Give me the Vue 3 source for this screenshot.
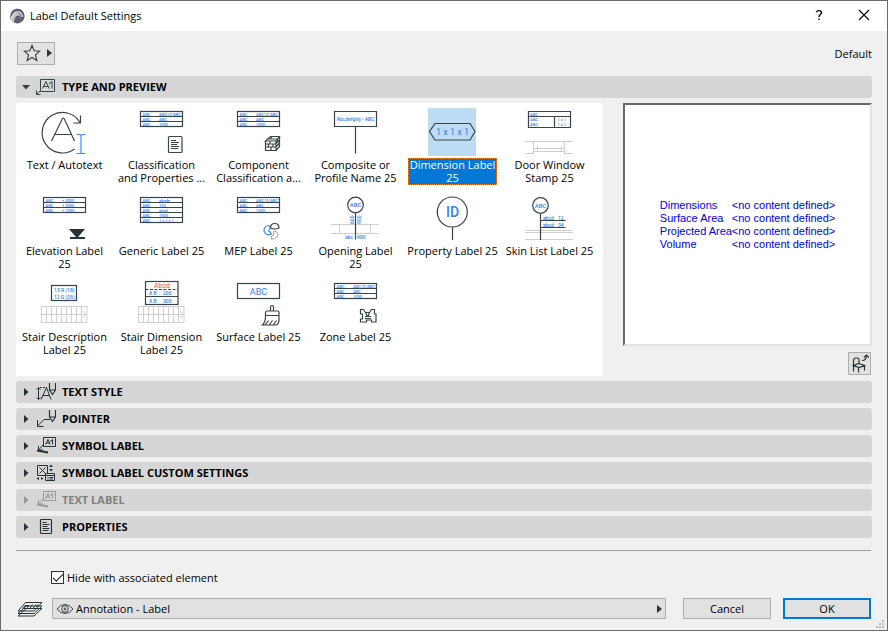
<script setup>
import { ref } from 'vue'

const table3 = ['ABC12/ABC1', 'ABC', '1000']
const tiles = [
  { id: 'autotext', label: 'Text / Autotext' },
  { id: 'classification', label: 'Classification\nand Properties ...', table: table3 },
  { id: 'component', label: 'Component\nClassification a...', table: table3 },
  { id: 'composite', label: 'Composite or\nProfile Name 25' },
  { id: 'dimension', label: 'Dimension Label\n25' },
  { id: 'door', label: 'Door Window\nStamp 25' },
  { id: 'elevation', label: 'Elevation Label\n25', table: ['+ 3000', '+ 2000', '+ 1000'] },
  { id: 'generic', label: 'Generic Label 25', table: ['abcde', '123', 'abcd', '1000', '1 x 1 x 1'] },
  { id: 'mep', label: 'MEP Label 25', table: table3 },
  { id: 'opening', label: 'Opening Label\n25' },
  { id: 'property', label: 'Property Label 25' },
  { id: 'skin', label: 'Skin List Label 25' },
  { id: 'stairdesc', label: 'Stair Description\nLabel 25' },
  { id: 'stairdim', label: 'Stair Dimension\nLabel 25' },
  { id: 'surface', label: 'Surface Label 25' },
  { id: 'zone', label: 'Zone Label 25', table: table3 },
]
const selected = ref('dimension')

const preview = ['Dimensions', 'Surface Area', 'Projected Area', 'Volume']

const sections = [
  { id: 'textstyle', title: 'TEXT STYLE' },
  { id: 'pointer', title: 'POINTER' },
  { id: 'symbol', title: 'SYMBOL LABEL' },
  { id: 'custom', title: 'SYMBOL LABEL CUSTOM SETTINGS' },
  { id: 'textlabel', title: 'TEXT LABEL', disabled: true },
  { id: 'properties', title: 'PROPERTIES' },
]
const hide = ref(true)
const layer = ref('Annotation - Label')
</script>

<template>
  <div class="dialog">
    <header class="titlebar">
      <svg class="logo" viewBox="0 0 16 16" aria-hidden="true">
        <circle cx="8" cy="8" r="7.300" fill="#c4c4cb" />
        <path d="M1.500 7C2.500 3 5 .700 8.500 .700c4 0 7 3.300 7 7.300 0 3-1.500 5.500-4.500 6.800C12 10 12 5.500 8.500 5 5 4.500 4 9 1 12z" fill="#5d5b6c" />
        <path d="M1.500 11.500C4 6 5.500 3.800 8.500 3.800c3 0 4.500 2.200 5 5.200" fill="none" stroke="#e8e8ee" stroke-width="1.300" />
        <path d="M5 14.600c.5-4 1.500-7 4-7 2.500 0 3 3.500 2 7.200-2 .8-4 .8-6-.2z" fill="#605e70" />
      </svg>
      <h1>Label Default Settings</h1>
      <button class="win" aria-label="Help">
        <svg viewBox="0 0 12 12"><path d="M3.500 3.300C3.500 1 8.500 1 8.500 3.500 8.500 5.500 6 5.500 6 8M6 9.500V11" fill="none" stroke="#000" stroke-width="1.400" /></svg>
      </button>
      <button class="win" aria-label="Close">
        <svg viewBox="0 0 12 12"><path d="M1 1l10 10M11 1L1 11" fill="none" stroke="#000" stroke-width="1.100" /></svg>
      </button>
    </header>

    <main>
      <div class="toolbar">
        <button class="fav" aria-label="Favorites">
          <svg width="18" height="18" viewBox="0 0 18 18"><path d="M9 1.500l2.200 5.300 5.500.4-4.200 3.700 1.300 5.500L9 13.500l-4.800 2.900 1.300-5.500L1.300 7.200l5.500-.4z" fill="none" stroke="#37444a" stroke-width="1.200" /></svg>
          <svg width="5" height="8" viewBox="0 0 5 8"><path d="M0 0l5 4-5 4z" fill="#333" /></svg>
        </button>
        <span>Default</span>
      </div>

      <h2>
        <button class="bar" aria-expanded="true">
          <svg class="tri" viewBox="0 0 8 8"><path d="M0 2h8L4 6.500z" fill="#3a3a3a" /></svg>
          <svg class="sico" viewBox="0 0 20 20"><g fill="none" stroke="#37444a"><path d="M4.500 2.500h14v12h-14zM4.500 10.500v3L1 17M.5 13.500v4h4" /><path d="M6.500 11.500L10 4.500l3 7M7.500 9.500h5M13 7l3-2.500v7" /></g></svg>
          <span>TYPE AND PREVIEW</span>
        </button>
      </h2>

      <div class="type">
        <div class="tiles">
          <button v-for="t in tiles" :key="t.id" class="tile" :class="{ on: t.id === selected }" :aria-pressed="t.id === selected" @click="selected = t.id">
            <svg class="art" viewBox="0 0 48 48" aria-hidden="true">
              <g v-if="t.table">
                <rect x="3.500" y="3.500" width="42" :height="t.table.length * 5" class="k" />
                <g v-for="(v, i) in t.table" :key="i">
                  <path v-if="i" :d="`M3.500 ${3.5 + i * 5}h42`" class="k" />
                  <text x="5.500" :y="7.500 + i * 5" class="tiny">ABC</text>
                  <text x="22" :y="7.500 + i * 5" class="tiny">{{ v }}</text>
                </g>
              </g>

              <g v-if="t.id === 'autotext'">
                <path class="k" d="M40 14.500A20.300 20.300 0 1 0 34.500 41M33.500 15h7V7.500M11.500 33l11-22.500q.8-1 1.600 0L34.500 33M14.500 26.500h17" />
                <path class="b" d="M36.500 26.500h3.200l1 1 1-1h3.800M41 27v18M36.500 45.500h9" />
              </g>
              <g v-else-if="t.id === 'classification'" class="k">
                <rect x="31.500" y="28.500" width="13.500" height="16" rx="1" />
                <path d="M34 32.500h5M34 34.500h8M34 36.500h6M34 38.500h8M34 40.500h7" />
              </g>
              <g v-else-if="t.id === 'component'" class="k">
                <path d="M31.500 33l5-4.500h9L42 33zM31.500 33v9.500H42V33M42 42.500l3.500-4v-10M31.500 36H42l3.500-4M31.500 39H42l3.500-4M36 33v3M39 36v3M34.500 36v3M37 39v3.500M34 31h9.500M38 28.500L36.500 31M43.500 31v3.500" />
              </g>
              <g v-else-if="t.id === 'composite'">
                <path class="k" d="M3.500 3.500h42v15h-42zM24.500 18.500v27" />
                <text x="24.500" y="13" text-anchor="middle" class="t5">Abcdefghij - ABC</text>
              </g>
              <g v-else-if="t.id === 'dimension'">
                <path class="k" d="M7 15.500h35l5 8-5 8.500H7L1.500 23.500z" />
                <text x="24.500" y="27" text-anchor="middle" class="t9">1 x 1 x 1</text>
              </g>
              <g v-else-if="t.id === 'door'">
                <path class="k" d="M3.500 3.500h42v16h-42zM3.500 8.500h42M29.500 8.500v11" />
                <text x="5" y="7.700" class="tiny">ABC</text><text x="5" y="13" class="tiny">ABC</text><text x="5" y="18" class="tiny">ABC</text>
                <text x="32.500" y="13" class="tiny">1 x 1</text><text x="32.500" y="18" class="tiny">1 x 1</text>
                <path class="g" d="M0 33.500h48M0 45.500h9M39 45.500h9M8.500 34v11.500M39.500 34v11.500M9 40.500h30M9 43.500h30M12.500 38v5.500M36.500 38v5.500" />
              </g>
              <path v-else-if="t.id === 'elevation'" d="M29 35h16l-7 8h7v2H30v-2h6z" fill="#263238" />
              <g v-else-if="t.id === 'mep'">
                <path class="b" d="M34.500 31.500a4.700 4.700 0 1 0 3 8.500q-1-2-3-3 2-2 1.500-4.500z" />
                <path class="k" d="M36.500 34c0-6 8.500-6 8.500 0q-4 2-8.500 0z" />
                <path fill="none" stroke="#999" d="M40 37c6 1 5 8-2.500 8q-.5-2 .5-3 2.500-1 2-5z" />
              </g>
              <g v-else-if="t.id === 'opening'">
                <path class="g" d="M0 30.500h48M0 39.500h48M8.500 31v8M39.500 31v8" />
                <circle class="k" cx="24.500" cy="11" r="7.800" /><path class="k" d="M24.500 19v26.500" />
                <text x="24.500" y="13.300" text-anchor="middle" class="t6">ABC</text>
                <text transform="translate(22.500 30) rotate(-90)" class="t5">600</text>
                <text transform="translate(30 30) rotate(-90)" class="t5">900</text>
                <text x="14" y="45" class="t5">abc</text><text x="26" y="45" class="t5">900</text>
              </g>
              <g v-else-if="t.id === 'property'">
                <circle class="k" cx="24.300" cy="18" r="15" /><path class="k" d="M24.500 33v13" />
                <text x="24.500" y="23" text-anchor="middle" class="t14">ID</text>
              </g>
              <g v-else-if="t.id === 'skin'">
                <path class="g" d="M0 36.500h48M0 38.500h48M0 45.500h48" />
                <circle class="k" cx="15.500" cy="11.500" r="7.800" /><path class="k" d="M15.500 19.500v26.500M15.500 26.500h25M15.500 33.500h25" />
                <text x="15.500" y="13.800" text-anchor="middle" class="t6">ABC</text>
                <text x="18" y="25.500" class="t5">abcd</text><text x="33" y="25.500" class="t5">12</text>
                <text x="18" y="32.500" class="t5">abcd</text><text x="33" y="32.500" class="t5">34</text>
              </g>
              <g v-else-if="t.id === 'stairdesc'">
                <rect class="k" x="11.500" y="5.500" width="25" height="15" />
                <text x="24.300" y="12" text-anchor="middle" class="t5">13 R (18)</text>
                <text x="24.300" y="18.500" text-anchor="middle" class="t5">12 G (25)</text>
              </g>
              <g v-else-if="t.id === 'stairdim'">
                <rect class="k" x="8.500" y="1.500" width="32.500" height="23" /><path class="k" d="M8.500 16.500h32.500" />
                <path class="k" d="M8.500 9.500h32.500" stroke-dasharray="3 1.500" />
                <text x="25" y="8" text-anchor="middle" class="red">Abcd</text>
                <text x="12" y="15" class="t5">A B</text><text x="26" y="15" class="t5">200</text>
                <text x="12" y="22.500" class="t5">A B</text><text x="26" y="22.500" class="t5">300</text>
              </g>
              <g v-else-if="t.id === 'surface'">
                <rect class="k" x="3.500" y="3.500" width="42" height="15" />
                <text x="24.500" y="14.500" text-anchor="middle" class="t9">ABC</text>
                <path class="k" d="M36.500 31v-4.500q1.500-2 3 0V31M31.500 36v-3.500q0-1.500 1.500-1.500h10.500q1.500 0 1.500 1.500v7.500q0 4-3 5H28.500q3-2.500 3-9.500h13.500M31.500 44.500l3-4M35.500 44.500l3-4M39.500 44.500l3-4" />
              </g>
              <path v-else-if="t.id === 'zone'" class="k" d="M29.500 29.500h3l2 3h4l2-3h3v4.500h1.500v8h-4.500v-2h-5v2h-6v-3h2v-5h-2zM34.500 32.500l2 4M38.500 32.500L37 36.500M34 36.500h6M34 38.500h6" />
              <path v-if="t.id.startsWith('stair')" class="g" d="M1.500 26.500h45.500v16H1.500zM1.500 34.500h45M6.500 26.500v16M11.500 26.500v16M16.500 26.500v16M21.500 26.500v16M26.500 26.500v16M31.500 26.500v16M36.500 26.500v16M41.500 26.500v16M43 31l3 3.500-3 3.500" />
            </svg>
            <span class="cap">{{ t.label }}</span>
          </button>
        </div>

        <div class="side">
          <div class="preview">
            <dl>
              <template v-for="p in preview" :key="p"><dt>{{ p }}</dt><dd>&lt;no content defined&gt;</dd></template>
            </dl>
          </div>
          <button class="view" aria-label="Change view">
            <svg width="19" height="19" viewBox="0 0 19 19"><g fill="none" stroke="#263238"><path d="M3.500 17.500V6.500q0-2 2-2.500h2q1.500 0 1.500 2v4M3.500 11.500l5-2 6 2-5.500 2zM8.500 13.500v5M14.500 11.500v5" stroke-width="1.200" /><path d="M12 6.500q4.500 0 4.500-5M14 3.500L16.500 1l2.500 2.500" stroke-width="1.100" /></g></svg>
          </button>
        </div>
      </div>

      <div class="sections">
        <h2 v-for="s in sections" :key="s.id">
          <button class="bar" :disabled="s.disabled" aria-expanded="false">
            <svg class="tri" viewBox="0 0 8 8"><path d="M2 0l4.500 4L2 8z" fill="currentColor" /></svg>
            <svg class="sico" viewBox="0 0 20 20">
              <g fill="none" stroke="currentColor">
                <g v-if="s.id === 'textstyle'"><path d="M2.500 6v11M.5 7.500l2-2 2 2M.5 15.500l2 2 2-2M5 17.500L10.500 5.500l4.500 12M7 13.500h7" /><path d="M4 5.500h7" stroke-dasharray="2 1" /><path d="M13.500 1v7l3 4.500L19.500 8V1M13.500 8h6" stroke-width="1.200" /></g>
                <g v-else-if="s.id === 'pointer'"><path d="M1.500 11v6.500h6M1.500 17L8 10.500h6" /><path d="M13.500 1v7l3 4.500L19.500 8V1M13.500 8h6" stroke-width="1.200" /></g>
                <g v-else-if="s.id === 'symbol' || s.id === 'textlabel'"><path d="M7.500 1.500h12v9h-12zM7.500 8.500L3 13.500M2.500 10v4h4.500M9.500 8.500L12 3.500l2 5M10.500 7h3M14 5.500l2.500-2v5" /><path d="M1 14.500l11 2" stroke-width="2" /></g>
                <g v-else-if="s.id === 'custom'"><path d="M1.500 2.500h10v10h-10zM3.500 4.500l6 6M9.500 4.500l-6 6" /><path d="M9.500 10.500h9v7h-9z" fill="#d6d6d6" /><path d="M9.500 12.500h9M11.500 14.500h1M13.500 14.500h3.500M11.500 16h1M13.500 16h3.500" /><path d="M15 1.500L13 4h4zM15 8.500L13 6h4zM.5 15.500L3 14v3zM7.500 15.500L5 14v3z" fill="currentColor" stroke="none" /></g>
                <g v-else><rect x="4.500" y="2.500" width="11" height="14" rx="1" stroke-width="1.200" /><path d="M6.500 5.500h4M6.500 7.500h7M6.500 9.500h5M6.500 11.500h7M6.500 13.500h6" /></g>
              </g>
            </svg>
            <span>{{ s.title }}</span>
          </button>
        </h2>
      </div>

      <hr>

      <label class="check">
        <input v-model="hide" type="checkbox">
        <span>Hide with associated element</span>
      </label>

      <footer>
        <svg class="layers" viewBox="0 0 26 16" aria-hidden="true"><g fill="#f0f0f0" stroke="#263238"><path d="M1 15h16l8-7.500H9zM1 12.500h16L25 5H9zM1 10h16l8-8.500H8.500z" /><path d="M6 7.500l2-3h4l-2.500 3zM12.500 8l3-4.500M15.500 8l3.500-4.500M19 6l2-2.500" fill="none" /></g></svg>
        <label class="combo">
          <svg width="18" height="12" viewBox="0 0 18 12"><g fill="none" stroke="#37444a"><path d="M1 6q3.500-4.500 8-4.500T17 6q-3.500 4.500-8 4.500T1 6z" /><circle cx="9" cy="6" r="3.300" /><circle cx="9" cy="6" r="1" /></g></svg>
          <select v-model="layer" aria-label="Layer"><option>Annotation - Label</option></select>
          <svg width="5" height="8" viewBox="0 0 5 8"><path d="M0 0l5 4-5 4z" fill="#333" /></svg>
        </label>
        <button class="btn">Cancel</button>
        <button class="btn ok">OK</button>
      </footer>
    </main>
    <svg class="grip" viewBox="0 0 8 8" aria-hidden="true"><path d="M6 0h2v2H6zM3 3h2v2H3zM6 3h2v2H6zM0 6h2v2H0zM3 6h2v2H3zM6 6h2v2H6z" fill="#bfbfbf" /></svg>
  </div>
</template>

<style>
body { margin: 0; }
</style>

<style scoped>
* { box-sizing: border-box; }
.dialog {
  position: relative;
  min-height: 100vh;
  border: 1px solid #6b6b6b;
  background: #f0f0f0;
  color: #000;
  font: 11px/13px "Open Sans", "Noto Sans", sans-serif;
}
button, select { font: inherit; color: inherit; padding: 0; margin: 0; border: 0; background: none; }
h1, h2, dl, dd { margin: 0; font: inherit; }
svg { display: block; flex: none; }
.titlebar { display: flex; align-items: center; height: 30px; padding: 0 1px 0 8px; background: #fff; }
.logo { width: 16px; height: 16px; }
h1 { flex: 1; padding-left: 5px; font-size: 11px; line-height: 16px; }
.win { display: grid; place-items: center; width: 45px; height: 30px; padding-bottom: 2px; }
.win svg { width: 12px; height: 12px; }
main { padding: 11px 15px; }
.toolbar { display: flex; justify-content: space-between; align-items: center; padding-left: 1px; margin-bottom: 11px; }
.fav { display: flex; align-items: center; justify-content: center; gap: 6px; width: 38px; height: 23px; padding: 0 0 2px 2px; border: 1px solid #adadad; background: #e1e1e1; }
.bar { display: flex; align-items: center; width: 100%; height: 22px; padding-left: 6px; border-radius: 3px; background: #d6d6d6; color: #263238; text-align: left; }
.bar span { padding: 0 0 2px 6px; color: #000; font-weight: 700; }
.bar:disabled, .bar:disabled span { color: #808080; }
.bar:disabled svg { opacity: 0.7; }
.tri { width: 8px; height: 8px; }
.sico { width: 20px; height: 20px; margin-left: 6px; }
.type { display: flex; gap: 20px; margin: 5px 0; }
.tiles { flex: 1; display: grid; grid-template-columns: repeat(6, 97px); grid-auto-rows: 86px; padding: 5px 0 10px; background: #fff; }
.tile { display: flex; flex-direction: column; align-items: center; gap: 2px; }
.art { width: 48px; height: 48px; margin-right: 1px; }
.cap { min-width: 89px; padding-bottom: 1px; white-space: pre; }
.on .art { background: #bddcf4; }
.on .cap { background: #0078d7; outline: 1px dotted #ff8728; outline-offset: -1px; color: #fff; }
.k { fill: none; stroke: #37444a; stroke-width: 1.2; }
.b { fill: none; stroke: #3f8cff; stroke-width: 1.2; }
.g { fill: none; stroke: #cfcfcf; }
.art text { font-family: Roboto, "Liberation Sans", sans-serif; fill: #2f80f5; }
.art .tiny { font-size: 4px; font-weight: 500; }
.art .t5 { font-size: 5px; font-weight: 500; }
.art .t6 { font-size: 6px; font-weight: 500; }
.art .t9 { font-size: 9px; }
.art .t14 { font-size: 14px; font-weight: 500; }
.art .red { font-size: 7px; fill: #ff4a3a; }
.side { display: flex; flex-direction: column; width: 249px; gap: 6px; }
.preview { display: grid; place-items: center; flex: 1; background: #fff; border: 2px solid; border-color: #696969 #e3e3e3 #e3e3e3 #696969; }
.preview dl { display: grid; grid-template-columns: 72px auto; font: 11px/13px "Liberation Sans", sans-serif; color: #0000e6; white-space: nowrap; }
.view { display: grid; place-items: center; align-self: flex-end; width: 23px; height: 23px; margin: 0 1px 1px 0; border: 1px solid #adadad; background: #e1e1e1; }
.sections { display: grid; gap: 5px; }
hr { height: 1px; margin: 12px 1px 20px 0; border: 0; background: #a0a0a0; }
.check { display: flex; align-items: center; width: max-content; gap: 3px; margin-left: 35px; }
.check input { appearance: none; width: 13px; height: 13px; margin: 0; border: 1px solid #333; background: #fff; display: grid; place-items: center; }
.check input:checked::before { content: ""; width: 9px; height: 4px; border: solid #222; border-width: 0 0 1px 1px; transform: translateY(-1px) rotate(-45deg); }
footer { display: flex; align-items: center; gap: 12px; margin-top: 14px; padding-right: 1px; }
.layers { width: 26px; height: 16px; margin: 0 -3px 0 1px; }
.combo { flex: 1; display: flex; align-items: center; height: 21px; padding: 0 3px; gap: 2px; margin-right: 5px; border: 1px solid #adadad; background: #e1e1e1; }
.combo select { flex: 1; appearance: none; outline: 0; }
.btn { width: 88px; height: 21px; border: 1px solid #adadad; background: #e1e1e1; }
.ok { border: 2px solid #0078d7; }
.grip { position: absolute; right: 3px; bottom: 2px; width: 8px; height: 8px; }
</style>
